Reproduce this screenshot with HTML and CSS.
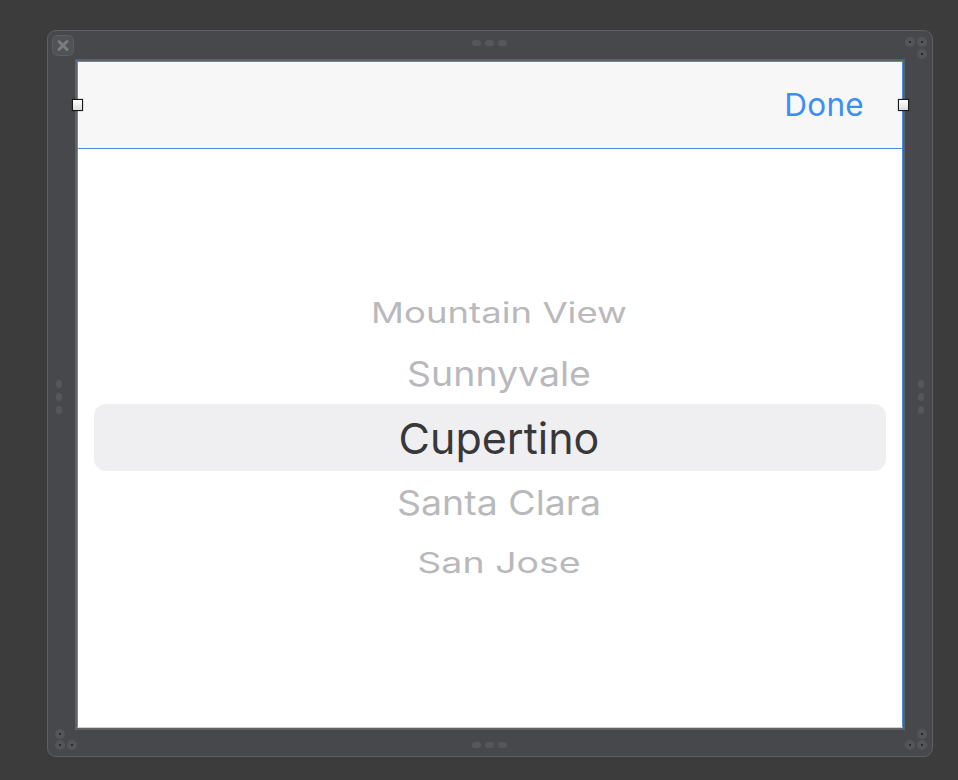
FILE: index.html
```html
<!DOCTYPE html>
<html lang="en">
<head>
<meta charset="utf-8">
<title>Picker</title>
<link rel="stylesheet" href="styles.css">
</head>
<body>
<div class="frame">
  <span class="close">
    <svg width="22" height="21" viewBox="0 0 22 21"><rect x="0.5" y="0.5" width="21" height="20" rx="5" fill="#505256" stroke="#5d5f63"/><path d="M7 6.5 L15 14.5 M15 6.5 L7 14.5" stroke="#7a7c80" stroke-width="3" stroke-linecap="round"/></svg>
  </span>
  <span class="pills pills-top"><i></i><i></i><i></i></span>
  <span class="pills pills-bottom"><i></i><i></i><i></i></span>
  <span class="pills-v pills-left"><i></i><i></i><i></i></span>
  <span class="pills-v pills-right"><i></i><i></i><i></i></span>
  <span class="dot" style="left:857px;top:6px"></span>
  <span class="dot" style="left:869px;top:6px"></span>
  <span class="dot" style="left:869px;top:18px"></span>
  <span class="dot" style="left:7px;top:698px"></span>
  <span class="dot" style="left:7px;top:709px"></span>
  <span class="dot" style="left:19px;top:709px"></span>
  <span class="dot" style="left:869px;top:698px"></span>
  <span class="dot" style="left:857px;top:709px"></span>
  <span class="dot" style="left:869px;top:709px"></span>
  <div class="view">
    <span class="handle handle-left"></span>
    <span class="handle handle-right"></span>
    <div class="toolbar">
      <span class="done">Done</span>
    </div>
    <div class="picker">
      <div class="row row-far"><span>Mountain View</span></div>
      <div class="row row-near"><span>Sunnyvale</span></div>
      <div class="row row-selected"><span>Cupertino</span></div>
      <div class="row row-near"><span>Santa Clara</span></div>
      <div class="row row-far row-last"><span>San Jose</span></div>
    </div>
  </div>
</div>
</body>
</html>
```
FILE: styles.css
```css
html, body {
  margin: 0;
  padding: 0;
}
body {
  background: #3c3c3d;
  width: 958px;
  height: 780px;
  overflow: hidden;
  padding: 30px 0 0 47px;
  box-sizing: border-box;
  font-family: Inter, "Liberation Sans", sans-serif;
}
.frame {
  position: relative;
  width: 886px;
  height: 727px;
  box-sizing: border-box;
  background: #46484c;
  border: 1px solid #5e5f63;
  border-radius: 9px;
  padding: 30px 29px 0 29px;
}
.close {
  position: absolute;
  left: 4px;
  top: 4px;
  width: 22px;
  height: 21px;
  display: block;
}
.close svg { display: block; }
.pills {
  position: absolute;
  left: 424px;
  display: flex;
  gap: 4px;
}
.pills-top { top: 9px; }
.pills-bottom { top: 711px; }
.pills i, .pills-v i {
  display: block;
  width: 9px;
  height: 6px;
  border-radius: 3px;
  background: #55575b;
}
.pills-v {
  position: absolute;
  top: 349px;
  display: flex;
  flex-direction: column;
  gap: 5px;
}
.pills-v i { width: 6px; height: 8px; }
.pills-left { left: 8px; }
.pills-right { left: 870px; }
.dot {
  position: absolute;
  width: 10px;
  height: 10px;
  border-radius: 50%;
  background: #535559;
}
.dot::after {
  content: "";
  position: absolute;
  left: 4px;
  top: 4px;
  width: 2px;
  height: 2px;
  border-radius: 50%;
  background: #1b1c1e;
}
.view {
  position: relative;
  width: 826px;
  height: 667px;
  box-sizing: border-box;
  background: #ffffff;
  border: 1px solid #4a8ee0;
  border-bottom-color: #cfd0d3;
  box-shadow: 0 0 0 2px #606165;
  display: flex;
  flex-direction: column;
}
.handle {
  position: absolute;
  top: 37px;
  width: 9px;
  height: 10px;
  background: linear-gradient(#ffffff, #dcdcdc);
  border: 1px solid #1a1a1a;
  box-shadow: 0 0 1px rgba(0,0,0,0.6);
  z-index: 2;
}
.handle-left { left: -6px; }
.handle-right { right: -7px; }
.toolbar {
  height: 86px;
  background: #f7f7f8;
  border-bottom: 1px solid #4a8ee0;
  display: flex;
  align-items: center;
  justify-content: flex-end;
  padding-right: 38px;
  flex-shrink: 0;
}
.done {
  color: #3a8ef6;
  font-size: 31.5px;
  letter-spacing: 0.3px;
  margin-top: -1px;
}
.picker {
  flex: 1;
  display: flex;
  flex-direction: column;
  padding-top: 135px;
}
.row {
  display: flex;
  align-items: center;
  justify-content: center;
  color: #b9b9bc;
  white-space: nowrap;
  padding-left: 18px;
}
.row span { display: block; }
.row-far { height: 58px; font-size: 36.5px; }
.row-far span { transform: scaleY(0.78); }
.row-last { font-size: 37.5px; }
.row-last span { transform: scaleY(0.76); }
.row-near { height: 62px; font-size: 37.5px; }
.row-near span { transform: scaleY(0.9); }
.row-selected {
  height: 67px;
  margin: 0 16px;
  border-radius: 12px;
  background: #efeff2;
  color: #38383a;
  font-size: 43px;
}
```
